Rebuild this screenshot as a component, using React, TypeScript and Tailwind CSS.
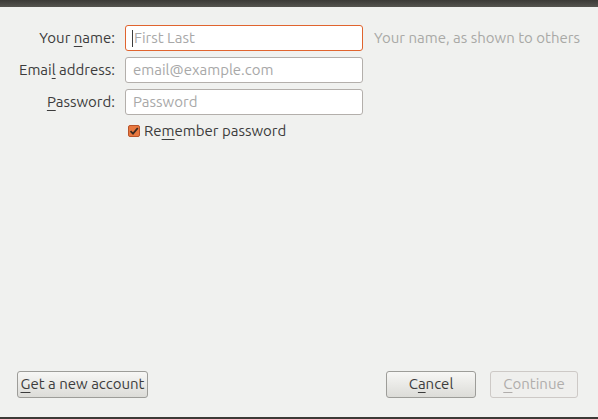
import React from "react"

const font = { fontFamily: "Ubuntu, 'Noto Sans', 'Open Sans', sans-serif" }

function Mn({ children }: { children: React.ReactNode }) {
  return <span className="underline underline-offset-[3px] decoration-1">{children}</span>
}

function Field({ label, placeholder, focused }: { label: React.ReactNode; placeholder: string; focused?: boolean }) {
  return (
    <div className="flex items-center h-[26px]">
      <div className="w-[115px] text-right text-[15px] text-[#3c3c3c]">{label}</div>
      <div
        className={
          focused
            ? "ml-[10px] w-[238px] h-[26px] rounded-[3px] border border-[#e0642e] bg-white flex items-center pl-[6px] text-[15px] text-[#a8a8a8]"
            : "ml-[10px] w-[238px] h-[26px] rounded-[3px] border border-[#b3afab] bg-white flex items-center pl-[7px] text-[15px] text-[#a8a8a8]"
        }
      >
        {focused && <span className="w-px h-[17px] bg-[#3c3c3c] mr-[1px]" />}
        {placeholder}
      </div>
    </div>
  )
}

export default function App() {
  return (
    <div className="w-[598px] h-[419px] flex flex-col bg-[#f0f1ef] overflow-hidden" style={font}>
      <div className="h-[7px] bg-gradient-to-b from-[#3c3b37] to-[#55544f]" />

      <div className="flex-1 flex flex-col pt-[18px]">
        <div className="flex items-center">
          <Field label={<>Your <Mn>n</Mn>ame:</>} placeholder="First Last" focused />
          <span className="ml-[11px] text-[15px] text-[#a9a9a6]">Your name, as shown to others</span>
        </div>
        <div className="flex flex-col gap-[6px] mt-[6px]">
          <Field label={<>Emai<Mn>l</Mn> address:</>} placeholder="email@example.com" />
          <Field label={<><Mn>P</Mn>assword:</>} placeholder="Password" />
        </div>

        <div className="flex items-center ml-[128px] mt-[5px]">
          <div className="w-[12px] h-[12px] rounded-[2px] border border-[#b9542a] bg-[#e8783f] flex items-center justify-center">
            <svg width="10" height="10" viewBox="0 0 10 10">
              <path d="M1.5 5.2 L4 7.6 L8.8 2" fill="none" stroke="#3a2a22" strokeWidth="1.8" />
            </svg>
          </div>
          <span className="ml-[4px] text-[15px] text-[#3c3c3c]">
            Re<Mn>m</Mn>ember password
          </span>
        </div>

        <div className="flex-1" />

        <div className="flex items-center pl-[17px] pr-[20px] mb-[19px]">
          <button className="h-[27px] w-[131px] rounded-[3px] border border-[#9d9d99] bg-gradient-to-b from-[#f7f7f5] to-[#dcdcd8] text-[15px] text-[#3c3c3c]">
            <Mn>G</Mn>et a new account
          </button>
          <div className="flex-1" />
          <button className="h-[27px] w-[90px] rounded-[3px] border border-[#9d9d99] bg-gradient-to-b from-[#f7f7f5] to-[#dcdcd8] text-[15px] text-[#3c3c3c]">
            C<Mn>a</Mn>ncel
          </button>
          <button className="ml-[14px] h-[27px] w-[88px] rounded-[3px] border border-[#cdc9c6] bg-[#efefed] text-[15px] text-[#b0adab]">
            <Mn>C</Mn>ontinue
          </button>
        </div>
      </div>

      <div className="h-[2px] bg-[#3c3b37]" />
    </div>
  )
}
